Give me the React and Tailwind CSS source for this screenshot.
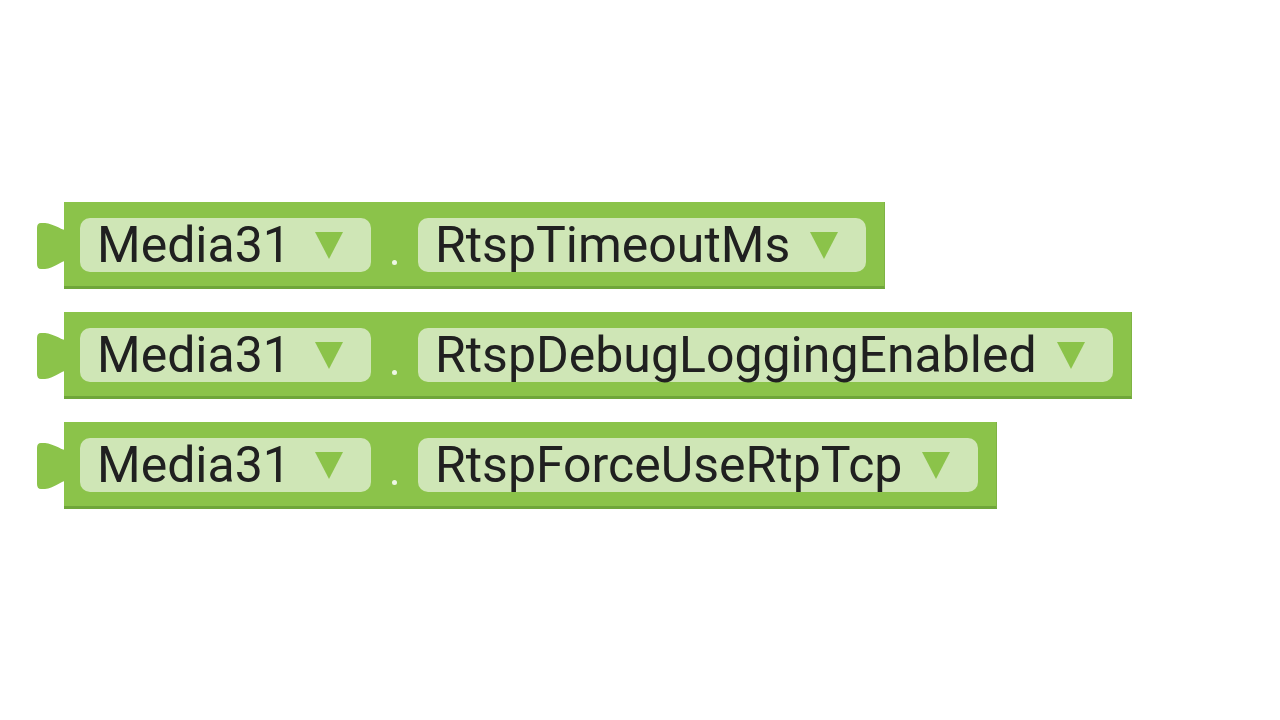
import React from "react";

const blocks = [
  { component: "Media31", prop: "RtspTimeoutMs" },
  { component: "Media31", prop: "RtspDebugLoggingEnabled" },
  { component: "Media31", prop: "RtspForceUseRtpTcp" },
];

function Arrow() {
  return (
    <svg width="28" height="27" viewBox="0 0 28 27" className="shrink-0">
      <polygon points="0,0 28,0 14,27" fill="#8bc34a" />
    </svg>
  );
}

function Field({ label, gap }) {
  return (
    <div className="flex h-[54px] items-center rounded-[10px] bg-[#cfe6b6] pl-[17px] pr-[28px]">
      <span className="text-[50px] leading-none text-[#202020]">{label}</span>
      <span className={gap}>
        <Arrow />
      </span>
    </div>
  );
}

function Block({ component, prop }) {
  return (
    <div className="flex items-start">
      {/* output tab */}
      <svg width="29" height="50" viewBox="0 0 29 50" className="mt-[19px] -mr-px shrink-0">
        <path d="M29,9 C24,8 18,3 9,2 L5,2 Q1,2 1,7 L1,43 Q1,48 5,48 L9,48 C18,47 24,41 29,40 Z" fill="#8bc34a" />
      </svg>
      <div className="flex items-stretch border-b-[3px] border-r-[1px] border-b-[#6fa63a] border-r-[#7fb344] bg-[#8bc34a] pb-[14px] pl-[16px] pr-[18px] pt-[16px]">
        <Field label={component} gap="ml-[24px]" />
        <div className="flex w-[47px] items-end justify-center pb-[7px]">
          <div className="h-[5px] w-[5px] rounded-full bg-[#eef7e4]" />
        </div>
        <Field label={prop} gap="ml-[20px]" />
      </div>
    </div>
  );
}

export default function App() {
  return (
    <div className="h-[720px] w-[1280px] overflow-hidden bg-white pl-[36px] pt-[202px]" style={{ fontFamily: "Roboto, 'Liberation Sans', sans-serif" }}>
      <div className="flex flex-col items-start gap-[23px]">
        {blocks.map((b) => (
          <Block key={b.prop} {...b} />
        ))}
      </div>
    </div>
  );
}
